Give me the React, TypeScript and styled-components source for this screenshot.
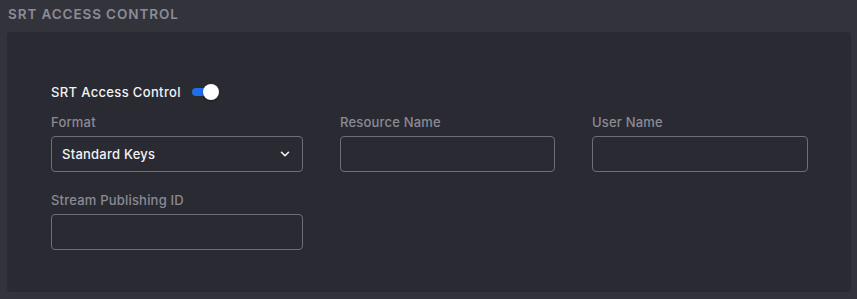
import styled, { createGlobalStyle } from "styled-components";

const GlobalStyle = createGlobalStyle`
  html, body {
    margin: 0;
    padding: 0;
    background: #33333c;
    font-family: Inter, "Noto Sans", sans-serif;
  }
`;

const Page = styled.div`
  width: 857px;
  height: 299px;
  box-sizing: border-box;
  padding: 6px 6px 0 7px;
`;

const SectionTitle = styled.h2`
  margin: 0 0 10px 1px;
  font-size: 13.5px;
  font-weight: 600;
  letter-spacing: 0.9px;
  line-height: 16px;
  color: #8c8c96;
  text-transform: uppercase;
`;

const Panel = styled.div`
  background: #2a2a33;
  border-radius: 4px;
  height: 260px;
  box-sizing: border-box;
  padding: 52px 44px 0;
`;

const ToggleRow = styled.label`
  display: flex;
  align-items: center;
  gap: 11px;
  font-size: 13px;
  font-weight: 500;
  letter-spacing: 0.35px;
  color: #f2f2f5;
  margin-bottom: 14px;
`;

const Track = styled.span<{ $on: boolean }>`
  position: relative;
  width: 25px;
  height: 8px;
  border-radius: 4px;
  background: ${(p) => (p.$on ? "#1f6ee8" : "#5a5a66")};
`;

const Knob = styled.span<{ $on: boolean }>`
  position: absolute;
  top: -4px;
  left: ${(p) => (p.$on ? "11px" : "-2px")};
  width: 16px;
  height: 16px;
  border-radius: 50%;
  background: #ffffff;
  box-shadow: 0 1px 2px rgba(0, 0, 0, 0.4);
`;

const Grid = styled.div`
  display: grid;
  grid-template-columns: 252px 215px 216px;
  column-gap: 37px;
  row-gap: 20px;
`;

const Field = styled.div`
  display: flex;
  flex-direction: column;
  gap: 6px;
`;

const Label = styled.span`
  font-size: 13px;
  font-weight: 500;
  letter-spacing: 0.2px;
  line-height: 16px;
  color: #8a8a95;
`;

const Box = styled.div`
  height: 36px;
  box-sizing: border-box;
  border: 1px solid #6e6e7a;
  border-radius: 4px;
  display: flex;
  align-items: center;
  justify-content: space-between;
  padding: 0 10px 0 10px;
  font-size: 13px;
  font-weight: 500;
  letter-spacing: 0.25px;
  color: #f2f2f5;
`;

const Chevron = () => (
  <svg width="14" height="14" viewBox="0 0 24 24" fill="none" stroke="#f2f2f5" strokeWidth="2.8" strokeLinecap="round" strokeLinejoin="round">
    <path d="M6 9l6 6 6-6" />
  </svg>
);

const App = () => {
  return (
    <Page>
      <GlobalStyle />
      <SectionTitle>SRT Access Control</SectionTitle>
      <Panel>
        <ToggleRow>
          SRT Access Control
          <Track $on>
            <Knob $on />
          </Track>
        </ToggleRow>
        <Grid>
          <Field>
            <Label>Format</Label>
            <Box>
              Standard Keys
              <Chevron />
            </Box>
          </Field>
          <Field>
            <Label>Resource Name</Label>
            <Box />
          </Field>
          <Field>
            <Label>User Name</Label>
            <Box />
          </Field>
          <Field>
            <Label>Stream Publishing ID</Label>
            <Box />
          </Field>
        </Grid>
      </Panel>
    </Page>
  );
};

export default App;
